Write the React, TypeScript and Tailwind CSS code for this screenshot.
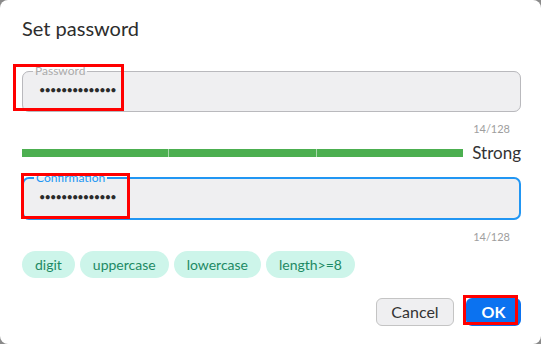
import React from 'react';

const rules = ['digit', 'uppercase', 'lowercase', 'length>=8'];

const Field = ({ label, active }: { label: string; active?: boolean }) => (
  <fieldset
    className={
      'rounded-[7px] bg-[#efeff1] ' +
      (active ? 'border-2 border-[#2196f3]' : 'border border-[#b9b9bd]')
    }
  >
    <legend
      className={
        'ml-[10px] px-[2px] text-[12px] leading-[12px] ' +
        (active ? 'text-[#2196f3]' : 'text-[#ababab]')
      }
    >
      {label}
    </legend>
    <div
      className={
        'flex h-[34px] items-start pt-[3px] text-[11px] leading-[20px] tracking-[-0.9px] text-[#2b2b2b] ' +
        (active ? 'pl-[15px]' : 'pl-[16px]')
      }
    >
      ••••••••••••••
    </div>
  </fieldset>
);

const Counter = () => (
  <div className="mt-[10px] pr-[11px] text-right text-[11px] leading-[13px] text-[#9e9e9e]">14/128</div>
);

const App = () => {
  return (
    <div className="h-[344px] w-[541px] bg-[#8a8a8a]" style={{ fontFamily: 'Lato, "Noto Sans", sans-serif' }}>
      <div className="relative flex h-full flex-col rounded-[8px] bg-white pl-[22px] pr-[20px] pt-[15px]">
        <h1 className="text-[20px] leading-[26px] text-[#2d2d2d]">Set password</h1>

        <div className="mt-[24px]">
          <Field label="Password" />
        </div>
        <Counter />

        <div className="mt-[7px] flex h-[22px] items-center gap-[9px]">
          <div className="flex h-[8px] flex-1 gap-[1px] bg-[#a8d8aa]">
            <div className="flex-1 bg-[#4caf50]" />
            <div className="flex-1 bg-[#4caf50]" />
            <div className="flex-1 bg-[#4caf50]" />
          </div>
          <span className="text-[17px] leading-[22px] text-[#333]">Strong</span>
        </div>

        <div className="mt-[8px]">
          <Field label="Confirmation" active />
        </div>
        <Counter />

        <div className="mt-[8px] flex gap-[5px]">
          {rules.map((r) => (
            <span
              key={r}
              className="flex h-[27px] items-center rounded-full bg-[#cdf5ea] px-[13px] text-[14px] text-[#1d8a64]"
            >
              {r}
            </span>
          ))}
        </div>

        <div className="mt-[20px] flex justify-end gap-[12px]">
          <button className="h-[28px] w-[78px] rounded-[6px] border border-[#c4c4c4] bg-[#efeff1] text-[16px] text-[#333]">
            Cancel
          </button>
          <button className="h-[28px] w-[55px] rounded-[6px] bg-[#0b72f0] text-[16px] font-bold text-white">
            OK
          </button>
        </div>

        <div className="absolute left-[13px] top-[64px] h-[47px] w-[111px] border-[3px] border-[#ff0000]" />
        <div className="absolute left-[21px] top-[173px] h-[46px] w-[109px] border-[3px] border-[#ff0000]" />
        <div className="absolute left-[463px] top-[295px] h-[30px] w-[55px] border-[3px] border-[#ff0000]" />
      </div>
    </div>
  );
};

export default App;
